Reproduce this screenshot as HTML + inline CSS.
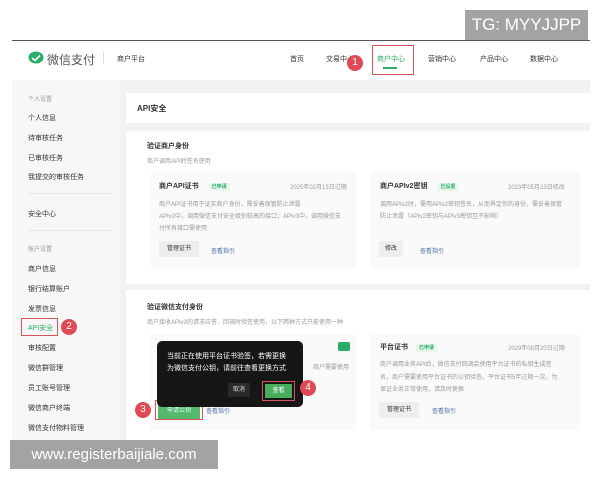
<!DOCTYPE html><html><head><meta charset="utf-8"><style>
*{margin:0;padding:0;box-sizing:border-box}
body{width:600px;height:480px;background:#fff;position:relative;overflow:hidden;font-family:"Liberation Sans","Noto Sans CJK SC",sans-serif;color:#333}
.a{position:absolute;white-space:nowrap}
.s{font-size:7px;color:#333}
.g{font-size:6px;color:#999}
.b{font-weight:bold}
.btn{position:absolute;background:#eee;font-size:6px;color:#333;text-align:center;line-height:16px;height:16px}
.lk{font-size:6px;color:#4a6fa5}
.tag{font-size:5px;color:#2aae67;background:#e8f6ee;padding:1px 3px}
.badge{position:absolute;width:16px;height:16px;border-radius:50%;background:#e04a55;color:#fff;font-size:10px;text-align:center;line-height:16px}
.red{position:absolute;border:1.5px solid #d9535e}
.card{position:absolute;background:#fafafa}
</style></head><body>
<div class="a" style="left:465px;top:10px;width:123px;height:30px;background:#a3a3a3;color:#fff;font-size:17px;line-height:30px;text-align:center">TG: MYYJJPP</div>
<div class="a" style="left:12px;top:40px;width:578px;height:1px;background:#555"></div>
<svg class="a" style="left:28px;top:51px" width="16" height="14" viewBox="0 0 16 14"><ellipse cx="8" cy="6.5" rx="7.5" ry="6" fill="#2aae67"/><path d="M4 7l3 2.5 5-5" stroke="#fff" stroke-width="1.6" fill="none"/></svg>
<div class="a" style="left:47px;top:51px;font-size:12px;color:#555">微信支付</div>
<div class="a" style="left:103px;top:52px;width:1px;height:12px;background:#ddd"></div>
<div class="a s" style="left:117px;top:54px">商户平台</div>
<div class="a s" style="left:290px;top:54px">首页</div>
<div class="a s" style="left:326px;top:54px">交易中心</div>
<div class="a s" style="left:377px;top:54px;color:#2aae67">商户中心</div>
<div class="a" style="left:383px;top:67px;width:14px;height:1.5px;background:#2aae67"></div>
<div class="red" style="left:372px;top:45px;width:42px;height:30px"></div>
<div class="badge" style="left:347px;top:55px">1</div>
<div class="a s" style="left:428px;top:54px">营销中心</div>
<div class="a s" style="left:480px;top:54px">产品中心</div>
<div class="a s" style="left:530px;top:54px">数据中心</div>
<div class="a" style="left:12px;top:80px;width:578px;height:360px;background:#f2f2f2"></div>
<div class="a" style="left:12px;top:80px;width:108px;height:360px;background:#f7f7f7"></div>
<div class="a g" style="left:28px;top:94px">个人设置</div>
<div class="a s" style="left:28px;top:113px">个人信息</div>
<div class="a s" style="left:28px;top:133px">待审核任务</div>
<div class="a s" style="left:28px;top:153px">已审核任务</div>
<div class="a s" style="left:28px;top:172px">我提交的审核任务</div>
<div class="a" style="left:28px;top:193px;width:84px;height:1px;background:#e4e4e4"></div>
<div class="a s" style="left:28px;top:209px">安全中心</div>
<div class="a" style="left:28px;top:230px;width:84px;height:1px;background:#e4e4e4"></div>
<div class="a g" style="left:28px;top:244px">账户设置</div>
<div class="a s" style="left:28px;top:264px">商户信息</div>
<div class="a s" style="left:28px;top:284px">银行结算账户</div>
<div class="a s" style="left:28px;top:304px">发票信息</div>
<div class="a s" style="left:28px;top:323px;color:#2aae67">API安全</div>
<div class="red" style="left:21px;top:318px;width:37px;height:18px"></div>
<div class="badge" style="left:61px;top:319px">2</div>
<div class="a s" style="left:28px;top:343px">审核配置</div>
<div class="a s" style="left:28px;top:363px">微信群管理</div>
<div class="a s" style="left:28px;top:383px">员工账号管理</div>
<div class="a s" style="left:28px;top:403px">微信商户终端</div>
<div class="a s" style="left:28px;top:423px">微信支付物料管理</div>
<div class="a" style="left:126px;top:93px;width:464px;height:30px;background:#fff"></div>
<div class="a b" style="left:137px;top:103px;font-size:8px">API安全</div>
<div class="a" style="left:126px;top:131px;width:464px;height:153px;background:#fff"></div>
<div class="a b s" style="left:147px;top:141px">验证商户身份</div>
<div class="a g" style="left:147px;top:156px">商户调用API时签名使用</div>
<div class="card" style="left:150px;top:172px;width:206px;height:96px"></div>
<div class="a b s" style="left:159px;top:181px">商户API证书 <span class="tag" style="margin-left:8px">已申请</span></div>
<div class="a g" style="left:290px;top:182px">2025年02月13日过期</div>
<div class="a g" style="left:159px;top:199px;line-height:12px">商户API证书用于证实商户身份，需妥善保管防止泄露<br>APIv2中，调用微信支付安全级别较高的接口；APIv3中，调用微信支<br>付所有接口需使用</div>
<div class="btn" style="left:159px;top:241px;width:40px">管理证书</div>
<div class="a lk" style="left:211px;top:246px">查看指引</div>
<div class="card" style="left:370px;top:172px;width:210px;height:96px"></div>
<div class="a b s" style="left:380px;top:181px">商户APIv2密钥 <span class="tag" style="margin-left:8px">已设置</span></div>
<div class="a g" style="left:508px;top:182px">2023年05月23日修改</div>
<div class="a g" style="left:380px;top:199px;line-height:12px">调用APIv2时，需用APIv2密钥签名，从而界定你的身份，需妥善保管<br>防止泄露（APIv2密钥与APIv3密钥互不影响）</div>
<div class="btn" style="left:379px;top:241px;width:24px">修改</div>
<div class="a lk" style="left:420px;top:246px">查看指引</div>
<div class="a" style="left:126px;top:290px;width:464px;height:150px;background:#fff"></div>
<div class="a b s" style="left:147px;top:302px">验证微信支付身份</div>
<div class="a g" style="left:147px;top:317px">商户接收APIv3的请求应答、回调时验签使用，以下两种方式只能使用一种</div>
<div class="card" style="left:150px;top:334px;width:206px;height:96px"></div>
<div class="a" style="left:338px;top:342px;width:12px;height:9px;background:#2aae67;border-radius:2px"></div>
<div class="a g" style="left:313px;top:362px">商户需要使用</div>
<div class="card" style="left:370px;top:334px;width:210px;height:96px"></div>
<div class="a b s" style="left:380px;top:342px">平台证书 <span class="tag" style="margin-left:6px">已申请</span></div>
<div class="a g" style="left:508px;top:343px">2029年08月20日过期</div>
<div class="a g" style="left:380px;top:359px;line-height:12.5px">商户调用业务API后，微信支付回调会使用平台证书的私钥生成签<br>名，商户需要使用平台证书的公钥验签。平台证书5年过期一次，为<br>保证业务正常使用，请及时更换</div>
<div class="btn" style="left:379px;top:402px;width:40px">管理证书</div>
<div class="a lk" style="left:432px;top:406px">查看指引</div>
<div class="btn" style="left:158px;top:403px;width:42px;background:#55b86c;color:#dff">申请公钥</div>
<div class="a lk" style="left:206px;top:406px">查看指引</div>
<div class="red" style="left:155px;top:400px;width:48px;height:20px"></div>
<div class="badge" style="left:135px;top:402px">3</div>
<div class="a" style="left:157px;top:341px;width:146px;height:66px;background:#161616;border-radius:5px"></div>
<div class="a" style="left:167px;top:351px;font-size:7px;color:#fff;line-height:12px;text-align:center">当前正在使用平台证书验签，若需更换<br>为微信支付公钥，请前往查看更换方式</div>
<div class="a" style="left:228px;top:383px;width:22px;height:14px;background:#2a2a2a;color:#ddd;font-size:6px;text-align:center;line-height:14px">取消</div>
<div class="a" style="left:265px;top:384px;width:27px;height:14px;background:#49ad5e;color:#fff;font-size:6px;text-align:center;line-height:14px">查看</div>
<div class="red" style="left:262px;top:381px;width:33px;height:20px"></div>
<div class="badge" style="left:300px;top:380px">4</div>
<div class="a" style="left:10px;top:440px;width:208px;height:29px;background:#a3a3a3;color:#fff;font-size:15px;line-height:29px;text-align:center">www.registerbaijiale.com</div>
</body></html>
